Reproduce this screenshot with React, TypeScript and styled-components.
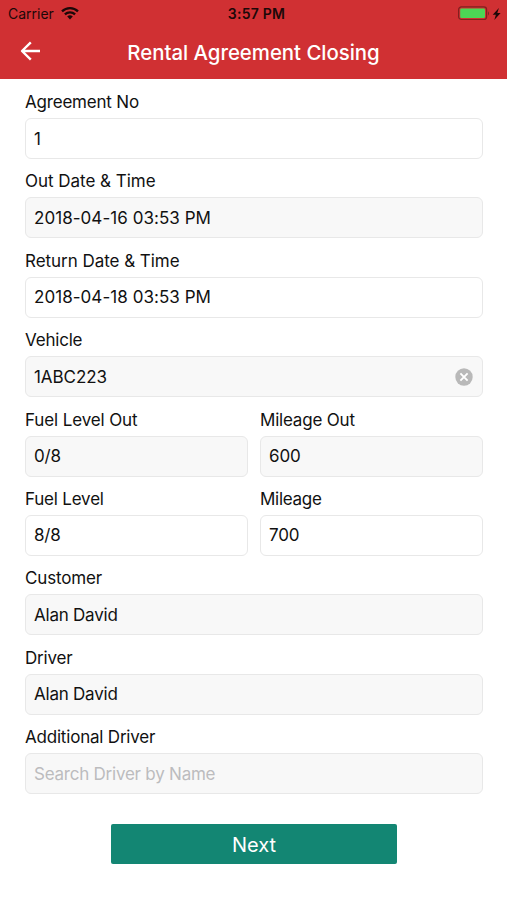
import React from 'react';
import styled, { createGlobalStyle } from 'styled-components';

const Global = createGlobalStyle`
  *{box-sizing:border-box}
  body{margin:0;background:#fff;font-family:Inter,"Liberation Sans",sans-serif;color:#111}
`;
const Screen = styled.div`width:507px;height:900px;background:#fff;overflow:hidden;`;
const Header = styled.header`height:79px;background:#d03033;`;
const StatusBar = styled.div`height:27px;display:grid;grid-template-columns:1fr auto 1fr;align-items:center;padding:0 4px 0 8px;font-size:14px;color:#1c0808;`;
const Carrier = styled.div`display:flex;align-items:center;gap:7px;`;
const Clock = styled.div`font-weight:600;font-size:14px;letter-spacing:.25px;padding-left:2px;`;
const Power = styled.div`display:flex;justify-content:flex-end;align-items:center;`;
const NavBar = styled.div`height:52px;display:grid;grid-template-columns:60px 1fr 60px;align-items:center;`;
const Back = styled.button`border:0;background:none;padding:0 0 4px 20px;display:flex;`;
const Title = styled.h1`margin:0;padding-bottom:2px;text-align:center;color:#fff;font-size:20.4px;font-weight:550;letter-spacing:-.02px;white-space:nowrap;`;
const Form = styled.main`padding:11px 24px 0 25px;`;
const Row = styled.div`display:flex;gap:12px;height:79.4px;`;
const Field = styled.div`flex:1;min-width:0;`;
const Label = styled.label<{ $track?: number }>`display:block;height:28px;line-height:24px;font-size:17px;letter-spacing:${p => p.$track ?? -0.2}px;`;
const Box = styled.div<{ $filled?: boolean; $muted?: boolean; $track?: number }>`
  height:41px;border:1px solid #e8e8e8;border-radius:6px;padding:0 9px 0 8px;display:flex;align-items:center;justify-content:space-between;
  font-size:17px;letter-spacing:${p => p.$track ?? -0.23}px;background:${p => p.$filled ? '#f8f8f8' : '#fff'};color:${p => p.$muted ? '#bcbcbe' : '#111'};`;
const Next = styled.button`display:block;width:286px;height:40px;margin:19.6px 0 0 86px;padding:1px 0 0;border:0;border-radius:2px;background:#138673;color:#fff;font:400 20px Inter,sans-serif;`;

type Item = { label: string; value: string; filled?: boolean; muted?: boolean; clear?: boolean; labelTrack?: number; valueTrack?: number };
const rows: Item[][] = [
  [{ label: 'Agreement No', value: '1' }],
  [{ label: 'Out Date & Time', value: '2018-04-16 03:53 PM', filled: true, labelTrack: -0.02, valueTrack: 0.05 }],
  [{ label: 'Return Date & Time', value: '2018-04-18 03:53 PM', labelTrack: -0.04, valueTrack: 0.05 }],
  [{ label: 'Vehicle', value: '1ABC223', filled: true, clear: true, valueTrack: -0.05 }],
  [{ label: 'Fuel Level Out', value: '0/8', filled: true, labelTrack: -0.12 }, { label: 'Mileage Out', value: '600', filled: true, valueTrack: -0.1 }],
  [{ label: 'Fuel Level', value: '8/8' }, { label: 'Mileage', value: '700', labelTrack: -0.28, valueTrack: -0.2 }],
  [{ label: 'Customer', value: 'Alan David', filled: true, labelTrack: -0.17 }],
  [{ label: 'Driver', value: 'Alan David', filled: true }],
  [{ label: 'Additional Driver', value: 'Search Driver by Name', filled: true, muted: true }],
];

const Wifi = () => <svg width="18" height="14" viewBox="0 0 18 14" fill="none" stroke="#1c0808" strokeWidth="2.3"><path d="M1 4.4a11.5 11.5 0 0 1 16 0M3.9 7.4a7.4 7.4 0 0 1 10.2 0" /><path d="M6.2 9.5a4 4 0 0 1 5.6 0L9 12.5z" fill="#1c0808" stroke="none" /></svg>;
const Battery = () => <svg width="45" height="16" viewBox="0 0 45 16"><rect x=".6" y=".9" width="28" height="12.6" rx="2.8" fill="none" stroke="#82201f" strokeWidth="1.2" /><rect x="2.2" y="2.5" width="24.8" height="9.4" rx="1.2" fill="#4cd555" /><path d="M30 5.2q2 2.2 0 4.5z" fill="#75272a" /><path d="M40.9 2l-6.2 6.7h3.2l-1.6 5.3 6.3-7h-3.3z" fill="#1c0808" /></svg>;
const Arrow = () => <svg width="21" height="20" viewBox="0 0 21 20" fill="none" stroke="#fff" strokeWidth="2.4" strokeLinejoin="round"><path d="M20 10H2.2M10.8 1.3L2 10l8.8 8.7" /></svg>;
const Clear = () => <svg width="18" height="18" viewBox="0 0 18 18"><circle cx="9" cy="9" r="8.7" fill="#b9b9b9" /><path d="M5.4 5.4l7.2 7.2M12.6 5.4l-7.2 7.2" stroke="#fff" strokeWidth="1.9" /></svg>;

export default function App() {
  return <><Global /><Screen>
    <Header>
      <StatusBar><Carrier>Carrier <Wifi /></Carrier><Clock>3:57 PM</Clock><Power><Battery /></Power></StatusBar>
      <NavBar><Back aria-label="Back"><Arrow /></Back><Title>Rental Agreement Closing</Title></NavBar>
    </Header>
    <Form>
      {rows.map((row, i) => <Row key={i}>{row.map(f => <Field key={f.label}><Label $track={f.labelTrack}>{f.label}</Label><Box $filled={f.filled} $muted={f.muted} $track={f.valueTrack}>{f.value}{f.clear && <Clear />}</Box></Field>)}</Row>)}
      <Next>Next</Next>
    </Form>
  </Screen></>;
}
